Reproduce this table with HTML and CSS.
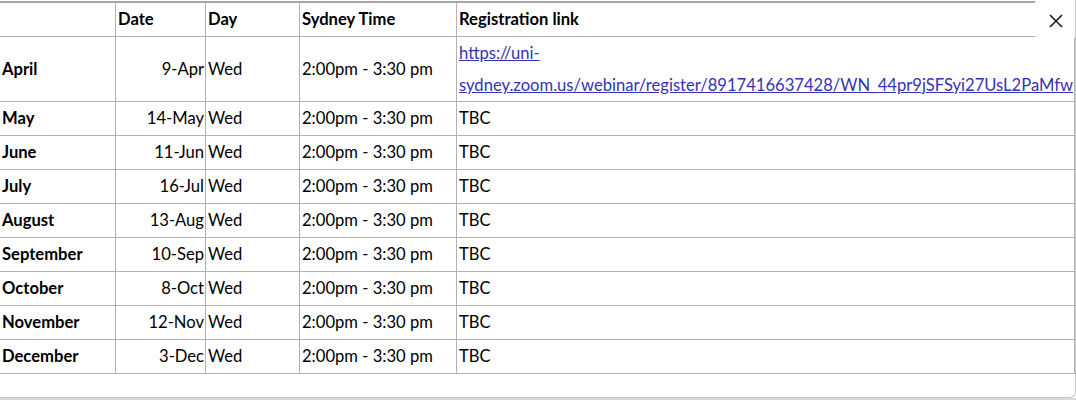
FILE: index.html
```html
<!DOCTYPE html>
<html>
<head>
<meta charset="utf-8">
<link rel="stylesheet" href="styles.css">
</head>
<body>
<div class="modal">
  <table class="sched">
    <colgroup>
      <col class="c-month"><col class="c-date"><col class="c-day"><col class="c-time"><col class="c-link">
    </colgroup>
    <tr class="head">
      <td></td><td>Date</td><td>Day</td><td>Sydney Time</td><td>Registration link</td>
    </tr>
    <tr class="tall">
      <td class="m">April</td><td class="d">9-Apr</td><td>Wed</td><td>2:00pm - 3:30 pm</td>
      <td class="link"><a href="#"><span class="ln">https://uni-</span><span class="ln">sydney.zoom.us/webinar/register/8917416637428/WN_44pr9jSFSyi27UsL2PaMfw</span></a></td>
    </tr>
    <tr><td class="m">May</td><td class="d">14-May</td><td>Wed</td><td>2:00pm - 3:30 pm</td><td>TBC</td></tr>
    <tr><td class="m">June</td><td class="d">11-Jun</td><td>Wed</td><td>2:00pm - 3:30 pm</td><td>TBC</td></tr>
    <tr><td class="m">July</td><td class="d">16-Jul</td><td>Wed</td><td>2:00pm - 3:30 pm</td><td>TBC</td></tr>
    <tr><td class="m">August</td><td class="d">13-Aug</td><td>Wed</td><td>2:00pm - 3:30 pm</td><td>TBC</td></tr>
    <tr><td class="m">September</td><td class="d">10-Sep</td><td>Wed</td><td>2:00pm - 3:30 pm</td><td>TBC</td></tr>
    <tr><td class="m">October</td><td class="d">8-Oct</td><td>Wed</td><td>2:00pm - 3:30 pm</td><td>TBC</td></tr>
    <tr><td class="m">November</td><td class="d">12-Nov</td><td>Wed</td><td>2:00pm - 3:30 pm</td><td>TBC</td></tr>
    <tr><td class="m">December</td><td class="d">3-Dec</td><td>Wed</td><td>2:00pm - 3:30 pm</td><td>TBC</td></tr>
  </table>
  <button class="close" aria-label="Close">
    <svg width="14" height="14" viewBox="0 0 14 14"><path d="M1 1 L13 13 M13 1 L1 13" stroke="#1a1a1a" stroke-width="1.6" fill="none"/></svg>
  </button>
</div>
<div class="behind"></div>
</body>
</html>
```
FILE: styles.css
```css
html, body {
  margin: 0;
  padding: 0;
  background: #ffffff;
}
body {
  width: 1076px;
  height: 400px;
  overflow: hidden;
  font-family: "Lato", "Liberation Sans", sans-serif;
  font-size: 16.6px;
  color: #000;
}
.modal {
  position: relative;
  box-sizing: border-box;
  width: 1076px;
  height: 398px;
  padding-top: 1px;
  border-right: 1px solid #c8c8c8;
  border-bottom: 1px solid #c8c8c8;
  border-bottom-right-radius: 6px;
  overflow: hidden;
  background: #fff;
}
.sched {
  border-collapse: collapse;
  table-layout: fixed;
  margin-left: -1px;
  width: 1075px;
}
.c-month { width: 116px; }
.c-date { width: 90px; }
.c-day { width: 94px; }
.c-time { width: 157px; }
.c-link { width: 618px; }
.sched td {
  border: 1px solid #b2b2b2;
  height: 34px;
  padding: 0 2px;
  white-space: nowrap;
  vertical-align: middle;
  box-sizing: border-box;
}
.sched tr.head td {
  border-top: 2px solid #a6a6a6;
  font-weight: 700;
  height: 34px;
}
.sched tr.tall td {
  height: 65px;
}
.sched td.m {
  font-weight: 700;
}
.sched td.d {
  text-align: right;
  padding-right: 1px;
}
.sched td.link {
  line-height: 32px;
}
.sched td.link a {
  color: #3333b8;
  text-decoration: underline;
}
.ln {
  display: block;
}
.close {
  position: absolute;
  top: 0;
  right: 0;
  width: 41px;
  height: 38px;
  border: 0;
  padding: 0;
  background: #fff;
  border-top-left-radius: 5px;
  border-bottom-left-radius: 5px;
  display: flex;
  align-items: center;
  justify-content: center;
}
.close svg {
  display: block;
  margin-left: 3px;
  margin-top: 4px;
}
.behind {
  height: 2px;
  background: #d9d9d9;
}
```
